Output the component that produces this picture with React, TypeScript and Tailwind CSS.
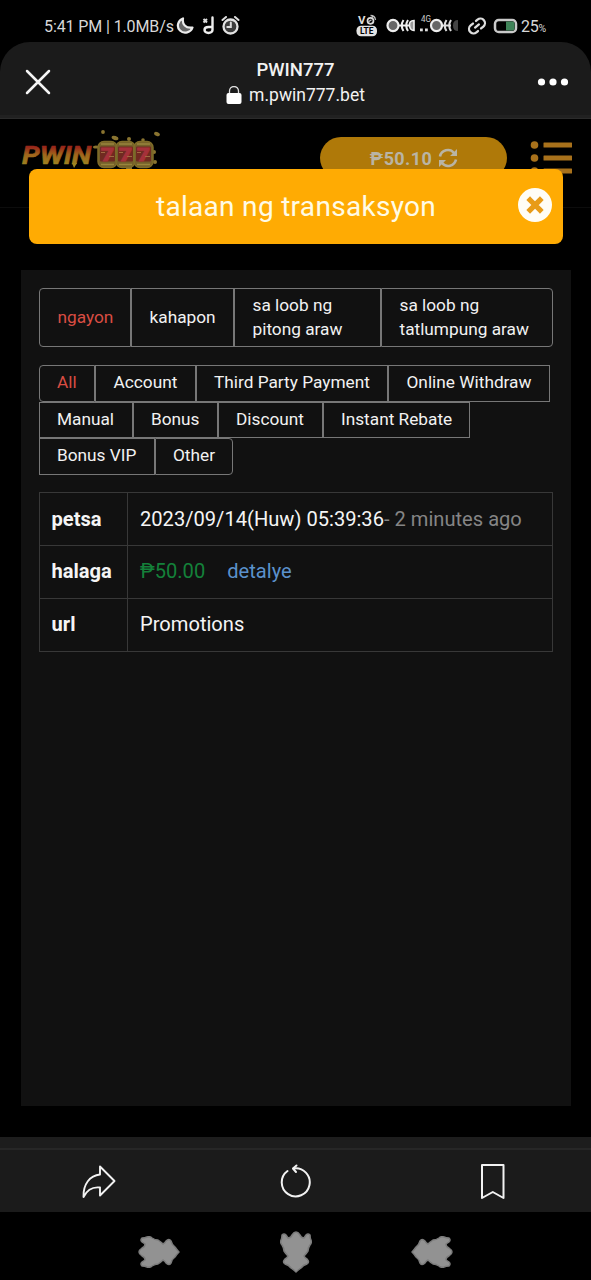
import { useState } from 'react';
import clsx from 'clsx';

interface Tab {
  id: string;
  label: string;
  box: string;
}

const dateTabs: Tab[] = [
  { id: 'today', label: 'ngayon', box: 'w-[92px] rounded-l' },
  { id: 'yesterday', label: 'kahapon', box: 'w-[103px]' },
  { id: 'week', label: 'sa loob ng pitong araw', box: 'w-[147px]' },
  { id: 'month', label: 'sa loob ng tatlumpung araw', box: 'w-[172px] rounded-r' },
];

const typeRows: Tab[][] = [
  [
    { id: 'all', label: 'All', box: 'w-[56.5px] rounded-l' },
    { id: 'account', label: 'Account', box: 'w-[100.5px]' },
    { id: 'third', label: 'Third Party Payment', box: 'w-[192.5px]' },
    { id: 'online', label: 'Online Withdraw', box: 'w-[162px]' },
  ],
  [
    { id: 'manual', label: 'Manual', box: 'w-[94px]' },
    { id: 'bonus', label: 'Bonus', box: 'w-[85px]' },
    { id: 'discount', label: 'Discount', box: 'w-[105px]' },
    { id: 'rebate', label: 'Instant Rebate', box: 'w-[147.5px]' },
  ],
  [
    { id: 'vip', label: 'Bonus VIP', box: 'w-[116px]' },
    { id: 'other', label: 'Other', box: 'w-[78.5px] rounded-r' },
  ],
];

const StatusBar = () => (
  <div className="h-[42px] pt-[16px] flex items-start text-[#d8d8d8]">
    <span className="ml-[44px] w-[131px] text-[16px] leading-[22px] tracking-[-0.11px] whitespace-nowrap">5:41 PM | 1.0MB/s</span>
    <svg viewBox="0 0 66 22" className="w-[66px] h-[22px] ml-[1px] fill-none">
      {/* moon */}
      <path d="M7 2.500C6 8 9.500 12.500 16.500 11.500C15 16.500 8 18.500 4 14.500C0 10.500 2 4.500 7 2.500Z" fill="#666" stroke="#ececec" strokeWidth="2.200" strokeLinejoin="round" />
      {/* muted note */}
      <path d="M27.500 3l3.500 3.500M31 3l-3.500 3.500" stroke="#ddd" strokeWidth="2" />
      <path d="M36.500 1.500V14a4 3 0 0 1 -8 0q0-3 4-3h4" stroke="#eee" strokeWidth="2.400" strokeLinecap="round" />
      {/* alarm */}
      <circle cx="54.500" cy="10.500" r="7" fill="#3c3c3c" stroke="#e2e2e2" strokeWidth="2.300" />
      <path d="M54.800 6.500v4.500h-3.500M46.500 4l3.500-3M62.500 4l-3.500-3" stroke="#ddd" strokeWidth="2" strokeLinecap="round" />
    </svg>
    <svg viewBox="0 0 165 24" className="w-[165px] h-[24px] ml-[114px] -mt-[2px] fill-none">
      <text x="2" y="10" textLength="7.500" lengthAdjust="spacingAndGlyphs" className="fill-[#ddd] font-bold text-[10px]">V</text>
      <circle cx="14.500" cy="6.800" r="3" stroke="#ddd" strokeWidth="1.700" />
      <path d="M12.500 7.800l3-2M14.500 1.500q4.500 0 5 4.500M15.500 4l2-2" stroke="#bbb" strokeWidth="1.300" />
      <rect x="0.500" y="11.700" width="20.500" height="10.500" rx="4.500" fill="#e2e2e2" />
      <text x="4" y="20.300" textLength="13.500" lengthAdjust="spacingAndGlyphs" className="fill-black font-bold text-[9px]">LTE</text>
      {/* fish bone signals */}
      <path d="M42 11.500h12M47.500 6q-3.500 5.500 0 11M52 6q-3.500 5.500 0 11" stroke="#eee" strokeWidth="2" />
      <path d="M58 6.500q-5 0-4.500 5t4.500 5z" fill="#999" stroke="#eee" strokeWidth="1.600" />
      <ellipse cx="37" cy="11.500" rx="5.500" ry="5.600" fill="#666" stroke="#eee" strokeWidth="2.200" />
      <text x="65" y="8.300" textLength="10" lengthAdjust="spacingAndGlyphs" className="fill-[#ccc] text-[8.500px]">4G</text>
      <rect x="64" y="14.500" width="2.800" height="2.800" fill="#ddd" />
      <rect x="69" y="14.500" width="2.800" height="2.800" fill="#ddd" />
      <path d="M102 6q-5 0-5 5.500t5 5.500z" fill="#444" />
      <path d="M85 11.500h10M90.500 6q-3.500 5.500 0 11M95 6q-3.500 5.500 0 11" stroke="#ddd" strokeWidth="2" />
      <ellipse cx="80.500" cy="11.500" rx="5.500" ry="5.600" fill="#666" stroke="#eee" strokeWidth="2.200" />
      {/* link */}
      <g transform="rotate(-40 121 12)" stroke="#ddd" strokeWidth="2.300" strokeLinecap="round">
        <path d="M118.500 16.500h-2a4.500 4.500 0 0 1 0-9h3" />
        <path d="M123.500 7.500h2a4.500 4.500 0 0 1 0 9h-3" />
        <path d="M118.500 12h5" />
      </g>
      <rect x="139" y="6" width="21" height="12" rx="3.800" stroke="#c9c9c9" strokeWidth="2.500" />
      <path d="M150 7.500h6.500q2 0 2 2v5q0 2-2 2h-6.500z" fill="#3f8358" />
    </svg>
    <span className="text-[16px] leading-[22px] tracking-[-0.2px]">25<span className="text-[10.500px]">%</span></span>
  </div>
);

const BrowserHeader = () => (
  <header className="h-[77px] rounded-t-[30px] bg-[#1b1b1b] flex items-start justify-between relative">
    <svg viewBox="0 0 28 28" className="w-[28px] h-[28px] ml-[24px] mt-[26px]">
      <path d="M3 3l22 22M25 3l-22 22" stroke="#f5f5f5" strokeWidth="2.500" strokeLinecap="round" />
    </svg>
    <div className="flex flex-col items-center pt-[16px] pl-[2px] text-[#f2f2f2]">
      <div className="text-[18.500px] leading-[25px] font-medium">PWIN777</div>
      <div className="flex items-center gap-[7px] text-[17.500px] leading-[24px]">
        <svg viewBox="0 0 16 18" className="w-[16px] h-[18px]">
          <path d="M3.500 8V5a4.500 4.500 0 0 1 9 0v3" fill="none" stroke="#ddd" strokeWidth="1.300" />
          <rect x="0.500" y="7" width="15" height="11" rx="2" fill="#fff" />
        </svg>
        <span>m.pwin777.bet</span>
      </div>
    </div>
    <svg viewBox="0 0 32 8" className="w-[32px] h-[8px] mr-[22px] mt-[36px] fill-white">
      <circle cx="4.500" cy="4" r="3.600" />
      <circle cx="16" cy="4" r="3.600" />
      <circle cx="27.500" cy="4" r="3.600" />
    </svg>
    <div className="absolute bottom-0 inset-x-0 h-[4px] bg-[#212121] border-b border-[#2b2b2b]" />
  </header>
);

const Logo = () => (
  <svg viewBox="0 0 142 50" className="w-[142px] h-[50px] ml-[20px] mt-[6px]">
    <defs>
      <linearGradient id="word" x1="0" y1="0" x2="0" y2="1">
        <stop offset="0.250" stopColor="#98261a" />
        <stop offset="0.500" stopColor="#a0651c" />
        <stop offset="0.850" stopColor="#9c8420" />
      </linearGradient>
    </defs>
    <text x="2" y="38.500" textLength="69" lengthAdjust="spacingAndGlyphs" fill="url(#word)" stroke="url(#word)" strokeWidth="0.600" className="font-bold italic text-[26px]">PWIN</text>
    <path d="M52 38h5l-3 5z" fill="#9c8420" />
    <g fill="#8a7430">
      <circle cx="83" cy="7" r="1.900" />
      <ellipse cx="95" cy="13" rx="3.500" ry="2" transform="rotate(20 95 13)" />
      <circle cx="109" cy="14" r="2" />
      <ellipse cx="137" cy="9" rx="3" ry="2" transform="rotate(25 137 9)" />
      <circle cx="123" cy="15" r="1.800" />
      <ellipse cx="76" cy="22" rx="3" ry="1.600" />
      <circle cx="134" cy="27" r="2" />
      <circle cx="135" cy="37" r="2" />
      <circle cx="109" cy="43" r="3" />
    </g>
    {[78, 96, 114].map((x) => (
      <g key={x}>
        <rect x={x} y="16.500" width="19" height="26" rx="6" fill="#75602a" stroke="#7f6c28" strokeWidth="1.500" />
        <rect x={x + 2} y="21.500" width="15" height="15" rx="1" fill="#702a20" />
        <path d={`M${x + 3} 19h13M${x + 3} 39.500h13`} stroke="#98843c" strokeWidth="1.500" />
        <text x={x + 3} y="36" textLength="13" lengthAdjust="spacingAndGlyphs" className="fill-[#a5313a] font-black text-[18px]" stroke="#a5313a">7</text>
        <path d={`M${x + 3} 27.500h4M${x + 11} 31.500h5`} stroke="#a06a42" strokeWidth="1" />
      </g>
    ))}
  </svg>
);

const SiteHeader = () => (
  <div className="h-[89px] border-b border-[#0c0c0c] flex items-start">
    <Logo />
    <div className="ml-[158px] mt-[18px] w-[187px] h-[42px] rounded-[21px] bg-[#af7909] flex items-center justify-center gap-[6px] pl-[1px] text-[#b9b4a4] text-[18px] font-bold tracking-[0.400px]">
      <span>₱50.10</span>
      <svg viewBox="0 0 20 20" className="w-[20px] h-[20px] fill-none">
        <path d="M2 8.500A8 8 0 0 1 16 5M18 11.500A8 8 0 0 1 4 15" stroke="#b9b4a4" strokeWidth="2.600" />
        <path d="M19 1v7h-7zM1 19v-7h7z" fill="#b9b4a4" />
      </svg>
    </div>
    <svg viewBox="0 0 43 36" className="w-[43px] h-[36px] ml-[23px] mt-[22px] fill-[#a8711b]">
      {[4, 17, 30].map((y) => (
        <g key={y}>
          <circle cx="4.500" cy={y} r="3.800" />
          <rect x="13.500" y={y - 2.5} width="28.500" height="5" rx="0.500" />
        </g>
      ))}
    </svg>
  </div>
);

const TitleBanner = () => (
  <div className="absolute left-[29px] top-[50px] w-[534px] h-[75px] rounded-[8px] bg-[#ffab03] flex items-center justify-center text-[#fffbe6]">
    <h1 className="text-[28px] leading-[36px] tracking-[0.300px] whitespace-nowrap">talaan ng transaksyon</h1>
    <button aria-label="Close" className="absolute right-[11px] top-[19px] w-[34px] h-[34px] rounded-full bg-[#fffdf6] flex items-center justify-center">
      <svg viewBox="0 0 20 20" className="w-[18px] h-[18px]">
        <path d="M4.500 4.500l11 11M15.500 4.500l-11 11" stroke="#e89b17" strokeWidth="5.800" strokeLinecap="square" />
      </svg>
    </button>
  </div>
);

const row = 'h-[53px] grid grid-cols-[88.5px_1fr] border-t border-[#383838]';
const head = 'pl-[12px] flex items-center font-bold border-r border-[#383838]';
const cell = 'pl-[12px] flex items-center whitespace-nowrap';

const DetailTable = () => (
  <div className="mt-[17.500px] border border-t-0 border-[#383838] text-[20.120px] text-[#f5f5f5]">
    <div className={row}>
      <div className={head}>petsa</div>
      <div className={cell}>
        2023/09/14(Huw) 05:39:36<span className="text-[#858585]">- 2 minutes ago</span>
      </div>
    </div>
    <div className={row}>
      <div className={clsx(head, 'pb-[1px]')}>halaga</div>
      <div className={clsx(cell, 'pb-[1px] gap-[22px]')}>
        <span className="text-[#14813a]">₱50.00</span>
        <a className="text-[#5b91cc]">detalye</a>
      </div>
    </div>
    <div className={row}>
      <div className={clsx(head, 'pb-[1px]')}>url</div>
      <div className={clsx(cell, 'pb-[1px]')}>Promotions</div>
    </div>
  </div>
);

const BrowserToolbar = () => (
  <div className="h-[75px] bg-[#1b1b1b]">
    <div className="h-[13px] bg-[#1d1d1d] border-b-2 border-[#272727]" />
    <div className="h-[62px] grid grid-cols-3 place-items-center fill-none stroke-[#f2f2f2]">
      <svg viewBox="0 0 36 36" className="w-[36px] h-[36px]" strokeWidth="1.900" strokeLinejoin="round">
        <path d="M19 3.500L33.500 18L19 32.500V24.500C11 23.500 6 27 2.500 34C2 21 9 12.500 19 11.500Z" />
      </svg>
      <svg viewBox="0 0 36 36" className="w-[36px] h-[36px]" strokeWidth="2" strokeLinecap="round" strokeLinejoin="round">
        <path d="M9.500 8A14 14 0 1 0 15.500 5.500" />
        <path d="M18.500 2.500L15 5.500L18 9" />
      </svg>
      <svg viewBox="0 0 36 36" className="w-[36px] h-[36px]" strokeWidth="2" strokeLinejoin="round">
        <path d="M7 2H28.500V35L17.800 29L7 35Z" />
      </svg>
    </div>
  </div>
);

const Leaf = ({ className }: { className?: string }) => (
  <svg viewBox="0 0 42 32" className={clsx('w-[42px] h-[32px] fill-[#929292] stroke-[#7c7c7c]', className)} strokeWidth="1.500" strokeLinejoin="round">
    <path d="M4 2Q7 2 9 1Q12 0 14 2Q17 4 20 4Q23 6 25 8Q27 7 28 5Q31 2 33 5Q34 9 37 11Q39 14 41 16Q39 18 37 21Q34 23 33 27Q31 30 28 27Q27 25 25 24Q23 26 20 28Q17 28 14 30Q12 32 9 31Q7 30 4 30Q2 28 4 26L7 24Q7 21 4 20Q1 18 1 16Q1 14 4 12Q7 11 7 8L4 6Q2 4 4 2Z" />
  </svg>
);

const SystemNav = () => (
  <div className="h-[68px] pt-[12px] flex justify-between items-center px-[138px]">
    <Leaf />
    <Leaf className="rotate-90" />
    <Leaf className="rotate-180" />
  </div>
);

export default function App() {
  const [day, setDay] = useState('today');
  const [type, setType] = useState('all');

  return (
    <div className="w-[591px] h-[1280px] bg-black overflow-hidden font-['Roboto',sans-serif]">
      <StatusBar />
      <BrowserHeader />

      <main className="relative h-[1018px]">
        <SiteHeader />
        <TitleBanner />

        <section className="mt-[62px] mx-auto w-[550px] h-[836px] bg-[#111] px-[18px] pt-[18px]">
          <div className="flex h-[59px]">
            {dateTabs.map((tab) => (
              <button
                key={tab.id}
                onClick={() => setDay(tab.id)}
                className={clsx(
                  'border border-[#777] pl-[18px] pr-[6px] pb-[2px] text-left text-[17.250px] leading-[24px]',
                  tab.box,
                  day === tab.id ? 'text-[#d94d43]' : 'text-[#f2f2f2]'
                )}
              >
                {tab.label}
              </button>
            ))}
          </div>

          <div className="mt-[18px]">
            {typeRows.map((tabs, i) => (
              <div key={i} className="flex h-[36.500px]">
                {tabs.map((tab) => (
                  <button
                    key={tab.id}
                    onClick={() => setType(tab.id)}
                    className={clsx(
                      'border border-[#777] pl-[17.500px] pb-[2px] text-left text-[17.250px] leading-[24px] whitespace-nowrap',
                      tab.box,
                      type === tab.id ? 'text-[#d94d43]' : 'text-[#f2f2f2]'
                    )}
                  >
                    {tab.label}
                  </button>
                ))}
              </div>
            ))}
          </div>

          <DetailTable />
        </section>
      </main>

      <BrowserToolbar />
      <SystemNav />
    </div>
  );
}
